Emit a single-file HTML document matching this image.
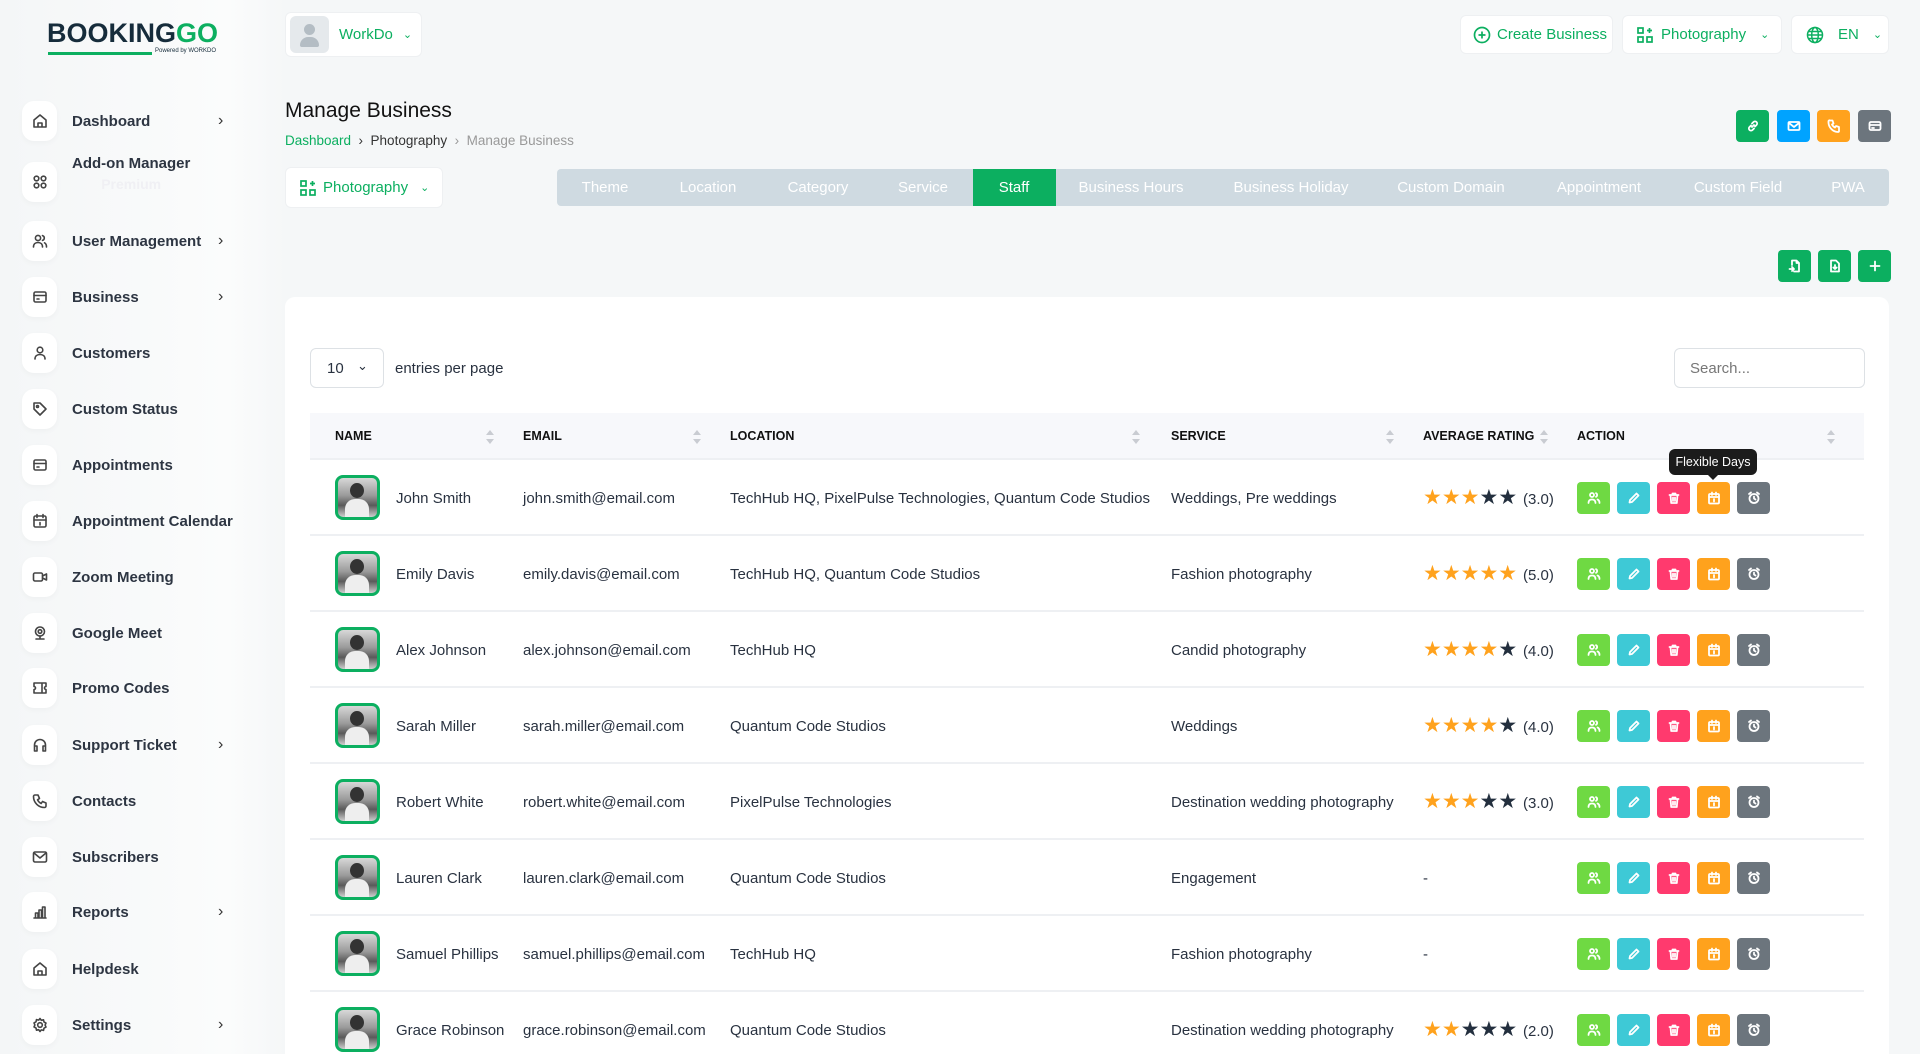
<!DOCTYPE html>
<html style="height:1054px;overflow:hidden"><head><meta charset="utf-8"><style>
*{box-sizing:border-box;margin:0;padding:0}
html,body{width:1920px;height:1054px;overflow:hidden}
body{background:#f5f7f8;font-family:"Liberation Sans",Arial,sans-serif;color:#293240;position:relative}
.side{position:absolute;left:0;top:0;width:285px;height:1054px;background:linear-gradient(90deg,#f4f6f7,#fbfcfc 80%,#f5f7f8)}
.logo{position:absolute;left:47px;top:18px;font-weight:900;font-size:27px;letter-spacing:0px;color:#162c3b}
.logo b{color:#0caf60}
.logo i{position:absolute;left:1px;top:34px;width:104px;height:3px;background:#0caf60;display:block}
.logo s{position:absolute;left:108px;top:30px;font-size:6px;text-decoration:none;color:#162c3b;white-space:nowrap;font-weight:400}
.mi{position:absolute;left:22px;height:40px;display:flex;align-items:center;font-size:15px;font-weight:700;color:#2d3542}
.mi .ic{width:35px;height:40px;background:#fff;border-radius:12px;display:flex;align-items:center;justify-content:center;margin-right:15px;box-shadow:0 2px 6px rgba(0,0,0,.03)}
.mi .ar{position:absolute;left:196px;font-weight:400;font-size:16px;color:#333}
svg.s{width:16px;height:16px;fill:none;stroke:#444;stroke-width:1.6;stroke-linecap:round;stroke-linejoin:round}
.box{position:absolute;background:#fff;border-radius:6px;border:1px solid #eef0f2}
.g{color:#0caf60}
.btn{position:absolute;width:33px;height:32px;border-radius:4px;display:flex;align-items:center;justify-content:center}
.btn svg{width:14px;height:14px;fill:none;stroke:#fff;stroke-width:1.8;stroke-linecap:round;stroke-linejoin:round}
.tabs{position:absolute;left:557px;top:169px;width:1332px;height:37px;background:#cfdae1;border-radius:4px}
.tab{position:absolute;top:0;height:37px;line-height:37px;color:#fff;font-size:15px;transform:translateX(-50%)}
.card{position:absolute;left:285px;top:297px;width:1604px;height:757px;background:#fff;border-radius:10px 10px 0 0}
.th{position:absolute;left:310px;top:413px;width:1554px;height:47px;background:#f7f8fb;border-bottom:2px solid #eef0f3}
.th span{position:absolute;top:16px;font-size:12.5px;font-weight:700;color:#111}
.sort{position:absolute;top:17px;width:8px;height:14px}
.sort:before{content:"";position:absolute;top:0;border:4px solid transparent;border-bottom:5px solid #c9ccd2;border-top:0}
.sort:after{content:"";position:absolute;bottom:0;border:4px solid transparent;border-top:5px solid #c9ccd2;border-bottom:0}
.row{position:absolute;left:310px;width:1554px;height:76px;border-bottom:2px solid #eef0f3;font-size:15px;color:#293240}
.row>*{position:absolute}
.av{left:25px;top:15px;width:45px;height:45px;border:3px solid #0caf60;border-radius:8px;background:linear-gradient(180deg,#d8d8d8,#9a9a9a 45%,#5a5a5a 70%,#cfcfcf);overflow:hidden}
.av:before{content:"";position:absolute;left:12px;top:5px;width:14px;height:15px;border-radius:50%;background:#333}
.av:after{content:"";position:absolute;left:7px;top:21px;width:24px;height:18px;border-radius:10px 10px 0 0;background:#eee}
.t{top:30px;white-space:nowrap}
.stars{top:25px;left:1113px;color:#ffa21d;font-size:21px;letter-spacing:0px;white-space:nowrap}
.stars em{font-style:normal;color:#232f3e}
.stars small{font-size:15px;color:#293240;letter-spacing:0}
.ab{top:22px;width:33px;height:32px;border-radius:4px;display:flex;align-items:center;justify-content:center}
.ab svg{width:14px;height:14px;fill:none;stroke:#fff;stroke-width:1.8;stroke-linecap:round;stroke-linejoin:round}
</style></head><body>
<div class="side">
<div class="logo">BOOKING<b>GO</b><i></i><s>Powered by WORKDO</s></div>
</div>
<div class="mi" style="top:101px"><div class="ic"><svg class="s" viewBox="0 0 16 16"><path d="M2 7l6-5 6 5v7H2z M6 14v-4h4v4"/></svg></div>Dashboard<span class="ar">›</span></div>
<div class="mi" style="top:162px"><div class="ic"><svg class="s" viewBox="0 0 16 16"><circle cx="4.5" cy="4.5" r="2.3"/><circle cx="11.5" cy="4.5" r="2.3"/><circle cx="4.5" cy="11.5" r="2.3"/><circle cx="11.5" cy="11.5" r="2.3"/></svg></div><div style="margin-top:-18px">Add-on Manager<div style="color:#f0f0f4;font-weight:700;text-align:center;font-size:14px;margin-top:4px">Premium</div></div></div>
<div class="mi" style="top:221px"><div class="ic"><svg class="s" viewBox="0 0 16 16"><circle cx="6" cy="5" r="2.6"/><path d="M1.5 14c0-3 2-4.5 4.5-4.5s4.5 1.5 4.5 4.5M10.5 2.6a2.5 2.5 0 010 4.8M12.5 9.8c1.3.6 2 2 2 4.2"/></svg></div>User Management<span class="ar">›</span></div>
<div class="mi" style="top:277px"><div class="ic"><svg class="s" viewBox="0 0 16 16"><rect x="2" y="3" width="12" height="10" rx="1.5"/><path d="M2 6.5h12M5 10h2"/></svg></div>Business<span class="ar">›</span></div>
<div class="mi" style="top:333px"><div class="ic"><svg class="s" viewBox="0 0 16 16"><circle cx="8" cy="5" r="2.8"/><path d="M3 14c0-3 2.2-4.5 5-4.5s5 1.5 5 4.5"/></svg></div>Customers</div>
<div class="mi" style="top:389px"><div class="ic"><svg class="s" viewBox="0 0 16 16"><path d="M2 2h6l6 6-6 6-6-6z"/><circle cx="5.5" cy="5.5" r="1"/></svg></div>Custom Status</div>
<div class="mi" style="top:445px"><div class="ic"><svg class="s" viewBox="0 0 16 16"><rect x="2" y="3" width="12" height="10" rx="1.5"/><path d="M2 6.5h12M5 10h2"/></svg></div>Appointments</div>
<div class="mi" style="top:501px"><div class="ic"><svg class="s" viewBox="0 0 16 16"><rect x="2" y="3" width="12" height="11" rx="1.5"/><path d="M2 7h12M5 1.5v3M11 1.5v3M8 9.5v2.5"/></svg></div>Appointment Calendar</div>
<div class="mi" style="top:557px"><div class="ic"><svg class="s" viewBox="0 0 16 16"><rect x="1.5" y="4" width="9" height="8" rx="1.5"/><path d="M10.5 7l4-2v6l-4-2"/></svg></div>Zoom Meeting</div>
<div class="mi" style="top:613px"><div class="ic"><svg class="s" viewBox="0 0 16 16"><circle cx="8" cy="6.5" r="4.5"/><circle cx="8" cy="6.5" r="1.8"/><path d="M4 14h8M8 11v3"/></svg></div>Google Meet</div>
<div class="mi" style="top:668px"><div class="ic"><svg class="s" viewBox="0 0 16 16"><path d="M2 3h12v3.5a1.5 1.5 0 000 3V13H2V9.5a1.5 1.5 0 000-3z M10 4v8"/></svg></div>Promo Codes</div>
<div class="mi" style="top:725px"><div class="ic"><svg class="s" viewBox="0 0 16 16"><path d="M2.5 11V8a5.5 5.5 0 0111 0v3M2.5 9h2.5v5H2.5zM11 9h2.5v5H11z"/></svg></div>Support Ticket<span class="ar">›</span></div>
<div class="mi" style="top:781px"><div class="ic"><svg class="s" viewBox="0 0 16 16"><path d="M3 2h3l1.5 3.5-2 1.3a8 8 0 003.7 3.7l1.3-2L14 10v3a1.5 1.5 0 01-1.5 1.5A11 11 0 011.5 3.5 1.5 1.5 0 013 2z"/></svg></div>Contacts</div>
<div class="mi" style="top:837px"><div class="ic"><svg class="s" viewBox="0 0 16 16"><rect x="1.5" y="3" width="13" height="10" rx="1.5"/><path d="M2 4l6 5 6-5"/></svg></div>Subscribers</div>
<div class="mi" style="top:892px"><div class="ic"><svg class="s" viewBox="0 0 16 16"><path d="M2 14h12M3.5 14V9h2.5v5M7 14V6h2.5v8M10.5 14V3H13v11"/></svg></div>Reports<span class="ar">›</span></div>
<div class="mi" style="top:949px"><div class="ic"><svg class="s" viewBox="0 0 16 16"><path d="M2 7l6-5 6 5v7H2z M6 14v-4h4v4"/></svg></div>Helpdesk</div>
<div class="mi" style="top:1005px"><div class="ic"><svg class="s" viewBox="0 0 16 16"><circle cx="8" cy="8" r="2.3"/><path d="M8 1.5l1.3 1.8 2.2-.5.5 2.2 2 1.1-.9 2 .9 2-2 1.1-.5 2.2-2.2-.5L8 14.5l-1.3-1.8-2.2.5-.5-2.2-2-1.1.9-2-.9-2 2-1.1.5-2.2 2.2.5z"/></svg></div>Settings<span class="ar">›</span></div>

<div class="box" style="left:285px;top:12px;width:137px;height:45px;display:flex;align-items:center;padding-left:4px">
<div style="width:39px;height:37px;background:#e5e9ec;border-radius:6px;position:relative;overflow:hidden"><div style="position:absolute;left:14px;top:8px;width:11px;height:11px;border-radius:50%;background:#b4bdc4"></div><div style="position:absolute;left:10px;top:21px;width:19px;height:10px;border-radius:9px 9px 2px 2px;background:#b4bdc4"></div></div>
<span class="g" style="font-size:15px;margin-left:10px">WorkDo</span><span class="g" style="font-size:11px;margin-left:10px">⌄</span></div>
<div class="box" style="left:1460px;top:15px;width:153px;height:39px;display:flex;align-items:center;padding-left:12px;font-size:15px" ><svg width="18" height="18" viewBox="0 0 18 18" fill="none" stroke="#0caf60" stroke-width="1.7"><circle cx="9" cy="9" r="7.5"/><path d="M9 5.5v7M5.5 9h7"/></svg><span class="g" style="margin-left:6px">Create Business</span></div>
<div class="box" style="left:1622px;top:15px;width:160px;height:39px;display:flex;align-items:center;padding-left:14px;font-size:15px"><svg width="16" height="16" viewBox="0 0 16 16" fill="none" stroke="#0caf60" stroke-width="1.7"><rect x="1" y="1" width="5" height="5"/><rect x="1" y="10" width="5" height="5"/><rect x="10" y="10" width="5" height="5"/><path d="M12.5 1v5M10 3.5h5"/></svg><span class="g" style="margin-left:8px">Photography</span><span class="g" style="margin-left:14px;font-size:11px">⌄</span></div>
<div class="box" style="left:1791px;top:15px;width:98px;height:39px;display:flex;align-items:center;padding-left:14px;font-size:15px"><svg width="18" height="18" viewBox="0 0 18 18" fill="none" stroke="#0caf60" stroke-width="1.5"><circle cx="9" cy="9" r="7.5"/><ellipse cx="9" cy="9" rx="3.3" ry="7.5"/><path d="M1.5 9h15M2.5 5.5h13M2.5 12.5h13"/></svg><span class="g" style="margin-left:14px">EN</span><span class="g" style="margin-left:14px;font-size:11px">⌄</span></div>

<div style="position:absolute;left:285px;top:99px;font-size:21px;color:#111">Manage Business</div>
<div style="position:absolute;left:285px;top:133px;font-size:13.5px;color:#333"><span class="g">Dashboard</span> &nbsp;›&nbsp; Photography &nbsp;<span style="color:#999">›&nbsp; Manage Business</span></div>

<div class="btn" style="left:1736px;top:110px;background:#0caf60"><svg viewBox="0 0 14 14"><path d="M6 8l2-2M5 6.5L3.5 8a2 2 0 003 3L8 9.5M9 7.5L10.5 6a2 2 0 00-3-3L6 4.5"/></svg></div>
<div class="btn" style="left:1777px;top:110px;background:#00a3ff"><svg viewBox="0 0 14 14"><rect x="1.5" y="3" width="11" height="8" rx="1"/><path d="M2 4l5 4 5-4"/></svg></div>
<div class="btn" style="left:1817px;top:110px;background:#ffa21d"><svg viewBox="0 0 14 14"><path d="M3 1.5h2.5l1 3-1.5 1a6 6 0 003 3l1-1.5 3 1V12a1 1 0 01-1 1A10 10 0 011.5 2.5a1 1 0 011.5-1z"/></svg></div>
<div class="btn" style="left:1858px;top:110px;background:#6c757d"><svg viewBox="0 0 14 14"><rect x="1.5" y="3" width="11" height="8" rx="1.5"/><path d="M1.5 6h11M4 9h2"/></svg></div>

<div class="box" style="left:285px;top:167px;width:158px;height:41px;display:flex;align-items:center;padding-left:14px;font-size:15px"><svg width="16" height="16" viewBox="0 0 16 16" fill="none" stroke="#0caf60" stroke-width="1.7"><rect x="1" y="1" width="5" height="5"/><rect x="1" y="10" width="5" height="5"/><rect x="10" y="10" width="5" height="5"/><path d="M12.5 1v5M10 3.5h5"/></svg><span class="g" style="margin-left:7px">Photography</span><span class="g" style="margin-left:12px;font-size:11px">⌄</span></div>

<div class="tabs">
<div style="position:absolute;left:416px;top:0;width:83px;height:37px;background:#0caf60"></div>
<span class="tab" style="left:48px">Theme</span><span class="tab" style="left:151px">Location</span><span class="tab" style="left:261px">Category</span><span class="tab" style="left:366px">Service</span><span class="tab" style="left:457px">Staff</span><span class="tab" style="left:574px">Business Hours</span><span class="tab" style="left:734px">Business Holiday</span><span class="tab" style="left:894px">Custom Domain</span><span class="tab" style="left:1042px">Appointment</span><span class="tab" style="left:1181px">Custom Field</span><span class="tab" style="left:1291px">PWA</span>
</div>

<div class="btn" style="left:1778px;top:250px;background:#0caf60"><svg viewBox="0 0 14 14"><path d="M4 6V1.5h4.5l2.5 2.5v8.5H6M8.5 1.5V4H11M1.5 10h4M4 8l2 2-2 2"/></svg></div>
<div class="btn" style="left:1818px;top:250px;background:#0caf60"><svg viewBox="0 0 14 14"><path d="M3 1.5h5l3 3v8H3z M7 6v4M5.3 8.5L7 10l1.7-1.5"/></svg></div>
<div class="btn" style="left:1858px;top:250px;background:#0caf60"><svg viewBox="0 0 14 14"><path d="M7 2.5v9M2.5 7h9"/></svg></div>

<div class="card"></div>
<div class="box" style="left:310px;top:348px;width:74px;height:40px;border:1px solid #dde1e5;font-size:15px;padding:11px 0 0 16px">10<span style="position:absolute;left:46px;top:9px;font-size:13px">⌄</span></div>
<div style="position:absolute;left:395px;top:360px;font-size:15px">entries per page</div>
<div class="box" style="left:1674px;top:348px;width:191px;height:40px;border:1px solid #dde1e5;font-size:15px;padding:11px 0 0 15px;color:#777">Search...</div>

<div class="th">
<span style="left:25px">NAME</span><i class="sort" style="left:176px"></i>
<span style="left:213px">EMAIL</span><i class="sort" style="left:383px"></i>
<span style="left:420px">LOCATION</span><i class="sort" style="left:822px"></i>
<span style="left:861px">SERVICE</span><i class="sort" style="left:1076px"></i>
<span style="left:1113px">AVERAGE RATING</span><i class="sort" style="left:1230px"></i>
<span style="left:1267px">ACTION</span><i class="sort" style="left:1517px"></i>
</div>

<div id="rows"></div>
<script>
var d=[["John Smith","john.smith@email.com","TechHub HQ, PixelPulse Technologies, Quantum Code Studios","Weddings, Pre weddings",3],
["Emily Davis","emily.davis@email.com","TechHub HQ, Quantum Code Studios","Fashion photography",5],
["Alex Johnson","alex.johnson@email.com","TechHub HQ","Candid photography",4],
["Sarah Miller","sarah.miller@email.com","Quantum Code Studios","Weddings",4],
["Robert White","robert.white@email.com","PixelPulse Technologies","Destination wedding photography",3],
["Lauren Clark","lauren.clark@email.com","Quantum Code Studios","Engagement",0],
["Samuel Phillips","samuel.phillips@email.com","TechHub HQ","Fashion photography",0],
["Grace Robinson","grace.robinson@email.com","Quantum Code Studios","Destination wedding photography",2]];
var ic=['<svg viewBox="0 0 14 14"><circle cx="5" cy="4" r="2"/><path d="M1.5 12c0-2.5 1.5-3.5 3.5-3.5s3.5 1 3.5 3.5M9 2.2a2 2 0 010 3.6M10.5 8.5c1.2.5 2 1.5 2 3.5"/></svg>',
'<svg viewBox="0 0 14 14"><path d="M9.5 2.5l2 2L5 11l-2.5.5L3 9z"/></svg>',
'<svg viewBox="0 0 14 14"><path d="M2.5 4h9M5.5 4V2.5h3V4M3.5 4l.7 8h5.6l.7-8M6 6.5v3.5M8 6.5v3.5"/></svg>',
'<svg viewBox="0 0 14 14"><rect x="2" y="3" width="10" height="9.5" rx="1"/><path d="M2 6h10M5 1.5v2.5M9 1.5v2.5M7 8v2.5"/></svg>',
'<svg viewBox="0 0 14 14"><circle cx="7" cy="7.5" r="4.5"/><path d="M7 5.5v2l1.5 1M2 3l2-1.5M12 3l-2-1.5"/></svg>'];
var col=["#6fd943","#3ec9d6","#ff3a6e","#ffa21d","#6c757d"];
var h="";
d.forEach(function(r,i){
 var top=460+i*76;
 var st="";
 if(r[4]){for(var k=0;k<5;k++)st+=k<r[4]?"★":"<em>★</em>";st+=' <small>('+r[4]+'.0)</small>';}
 h+='<div class="row" style="top:'+top+'px"><div class="av"></div><span class="t" style="left:86px">'+r[0]+'</span><span class="t" style="left:213px">'+r[1]+'</span><span class="t" style="left:420px">'+r[2]+'</span><span class="t" style="left:861px">'+r[3]+'</span>'+(r[4]?'<span class="stars">'+st+'</span>':'<span class="t" style="left:1113px">-</span>');
 for(var j=0;j<5;j++)h+='<div class="ab" style="left:'+(1267+j*40)+'px;background:'+col[j]+'">'+ic[j]+'</div>';
 h+='</div>';
});
document.getElementById("rows").innerHTML=h;
</script>
<div style="position:absolute;left:1669px;top:449px;width:88px;height:26px;background:#1b1b1b;color:#fff;border-radius:6px;font-size:12.5px;line-height:26px;text-align:center">Flexible Days</div>
<div style="position:absolute;left:1708px;top:475px;border:5px solid transparent;border-top:5px solid #1b1b1b"></div>
</body></html>
